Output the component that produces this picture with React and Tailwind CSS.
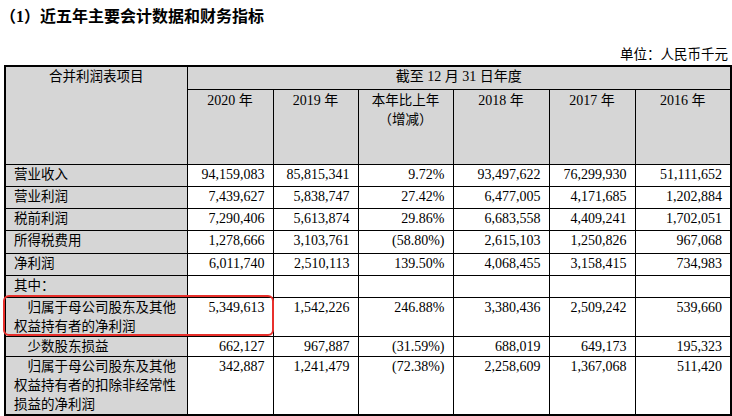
import React from 'react';

const rows = [
  { label: ['营业收入'], h: 'h-[22px]', v: ['94,159,083', '85,815,341', '9.72%', '93,497,622', '76,299,930', '51,111,652'] },
  { label: ['营业利润'], h: 'h-[22px]', v: ['7,439,627', '5,838,747', '27.42%', '6,477,005', '4,171,685', '1,202,884'] },
  { label: ['税前利润'], h: 'h-[22px]', v: ['7,290,406', '5,613,874', '29.86%', '6,683,558', '4,409,241', '1,702,051'] },
  { label: ['所得税费用'], h: 'h-[23px]', v: ['1,278,666', '3,103,761', '(58.80%)', '2,615,103', '1,250,826', '967,068'] },
  { label: ['净利润'], h: 'h-[22px]', v: ['6,011,740', '2,510,113', '139.50%', '4,068,455', '3,158,415', '734,983'] },
  { label: ['其中：'], h: 'h-[22px]', v: ['', '', '', '', '', ''] },
  { label: ['\u3000归属于母公司股东及其他', '权益持有者的净利润'], h: 'h-[39px]', v: ['5,349,613', '1,542,226', '246.88%', '3,380,436', '2,509,242', '539,660'] },
  { label: ['\u3000少数股东损益'], h: 'h-[20px]', v: ['662,127', '967,887', '(31.59%)', '688,019', '649,173', '195,323'] },
  { label: ['\u3000归属于母公司股东及其他', '权益持有者的扣除非经常性', '损益的净利润'], h: 'h-[58px]', v: ['342,887', '1,241,479', '(72.38%)', '2,258,609', '1,367,068', '511,420'] },
];

const font = { fontFamily: '"Liberation Serif", "Noto Sans CJK SC", serif' };

export default function App() {
  return (
    <div className="relative w-[732px] h-[416px] bg-white overflow-hidden text-black" style={font}>
      <div className="pt-[7px] text-[16px] leading-[20px] font-bold">（1）近五年主要会计数据和财务指标</div>

      <div className="mt-[19px] pr-[4px] text-right text-[13.5px] leading-[18px]">单位：人民币千元</div>

      <table className="ml-[4px] mt-[1px] w-[726px] table-fixed border-collapse border-2 border-black">
        <colgroup>
          <col className="w-[182px]" />
          <col className="w-[86px]" />
          <col className="w-[85px]" />
          <col className="w-[95px]" />
          <col className="w-[96px]" />
          <col className="w-[86px]" />
          <col className="w-[96px]" />
        </colgroup>
        <thead>
          <tr className="h-[23px] bg-[#d6d6d6]">
            <td rowSpan={2} className="border border-black align-top text-center text-[13.5px] leading-[19px]">合并利润表项目</td>
            <td colSpan={6} className="border border-black align-top text-center text-[14px] leading-[19px]">截至 12 月 31 日年度</td>
          </tr>
          <tr className="h-[75px] bg-[#d6d6d6]">
            {['2020 年', '2019 年'].map(t => (
              <td key={t} className="border border-black align-top text-center text-[14px] leading-[19px] pt-[1px]">{t}</td>
            ))}
            <td className="border border-black align-top text-center text-[13.5px] leading-[19px] pt-[1px]">
              本年比上年<br />（增减）
            </td>
            {['2018 年', '2017 年', '2016 年'].map(t => (
              <td key={t} className="border border-black align-top text-center text-[14px] leading-[19px] pt-[1px]">{t}</td>
            ))}
          </tr>
        </thead>
        <tbody>
          {rows.map((r, i) => (
            <tr key={i} className={r.h}>
              <td className="border border-black bg-[#d6d6d6] align-top pl-[8px] text-[13.5px] leading-[19px] whitespace-nowrap">
                {r.label.map((l, j) => (
                  <div key={j}>{l}</div>
                ))}
              </td>
              {r.v.map((n, j) => (
                <td key={j} className="border border-black align-top text-right pr-[8px] text-[14px] leading-[19px]">{n}</td>
              ))}
            </tr>
          ))}
        </tbody>
      </table>

      {/* 红框标注 */}
      <div className="absolute left-[3px] top-[295px] w-[271px] h-[41px] border-2 border-[#e8302c] rounded-[6px]" />
    </div>
  );
}
